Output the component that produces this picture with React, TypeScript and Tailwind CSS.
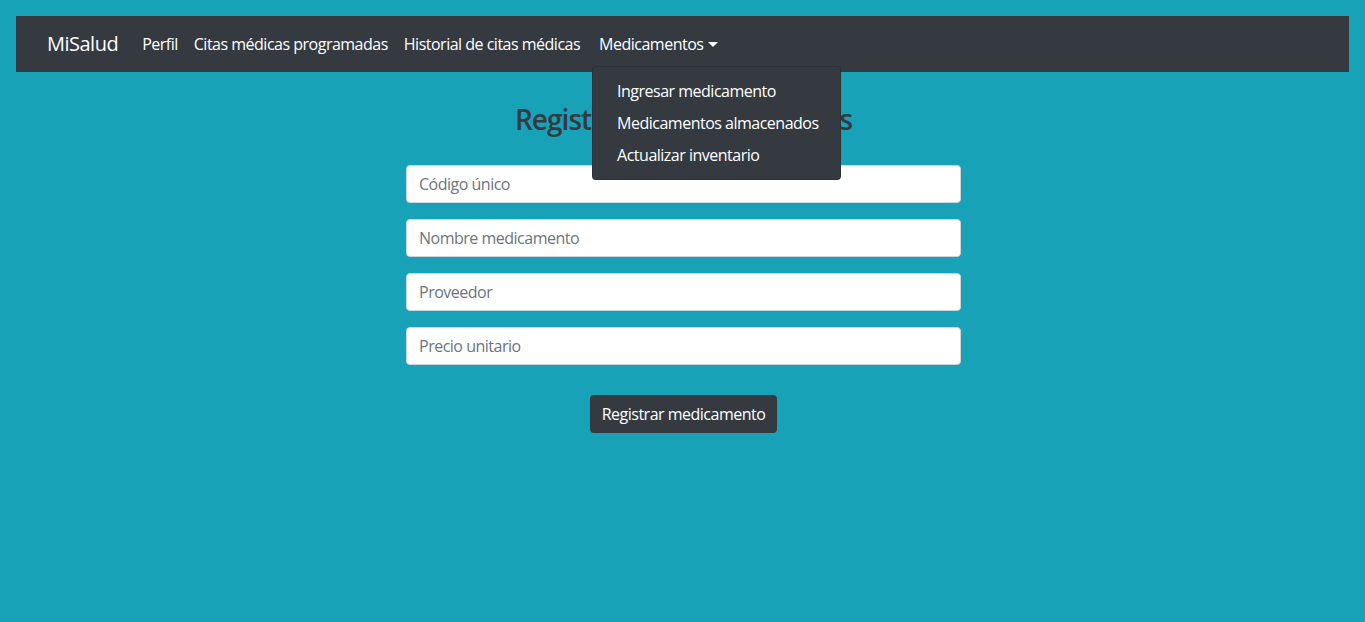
import { useState } from 'react';

const navLinks = ['Perfil', 'Citas médicas programadas', 'Historial de citas médicas'];
const dropdownItems = ['Ingresar medicamento', 'Medicamentos almacenados', 'Actualizar inventario'];
const fields = ['Código único', 'Nombre medicamento', 'Proveedor', 'Precio unitario'];

export default function App() {
  const [open] = useState(true);

  return (
    <div className="min-h-screen bg-[#17a2b8] p-4 text-[16px] tracking-[-0.5px] font-['Open_Sans',sans-serif]">
      {/* Navbar */}
      <nav className="flex h-14 items-center bg-[#343a40] pl-[31px]">
        <span className="mr-4 text-[20px] text-white">MiSalud</span>
        <ul className="flex items-center">
          {navLinks.map((l) => (
            <li key={l} className="px-2 text-white">{l}</li>
          ))}
          <li className="relative pl-[11px] pr-2 text-white">
            <span className="flex items-center">
              Medicamentos
              <span className="ml-[5px] mt-[1px] h-0 w-0 border-x-[5px] border-t-[5px] border-x-transparent border-t-white" />
            </span>
            {open && (
              <div className="absolute left-[4px] top-[34px] z-10 whitespace-nowrap rounded border border-black/15 bg-[#343a40] py-2">
                {dropdownItems.map((d) => (
                  <div key={d} className="py-[4px] pl-6 pr-[21px] leading-6 text-white">{d}</div>
                ))}
              </div>
            )}
          </li>
        </ul>
      </nav>

      {/* Form */}
      <main className="mx-auto flex w-[555px] translate-x-[1px] flex-col items-center pt-[31px]">
        <h3 className="mb-[28px] text-[28px] font-[550] leading-[1.2] tracking-[-0.95px] text-[#343a40]">Registro de medicamentos</h3>
        {fields.map((f) => (
          <input
            key={f}
            placeholder={f}
            className="mb-4 h-[38px] w-full rounded border border-[#ced4da] bg-white px-3 text-[#495057] outline-none placeholder:text-[#6c757d]"
          />
        ))}
        <button className="mt-[14px] h-[38px] rounded bg-[#343a40] px-3 text-white">Registrar medicamento</button>
      </main>
    </div>
  );
}
